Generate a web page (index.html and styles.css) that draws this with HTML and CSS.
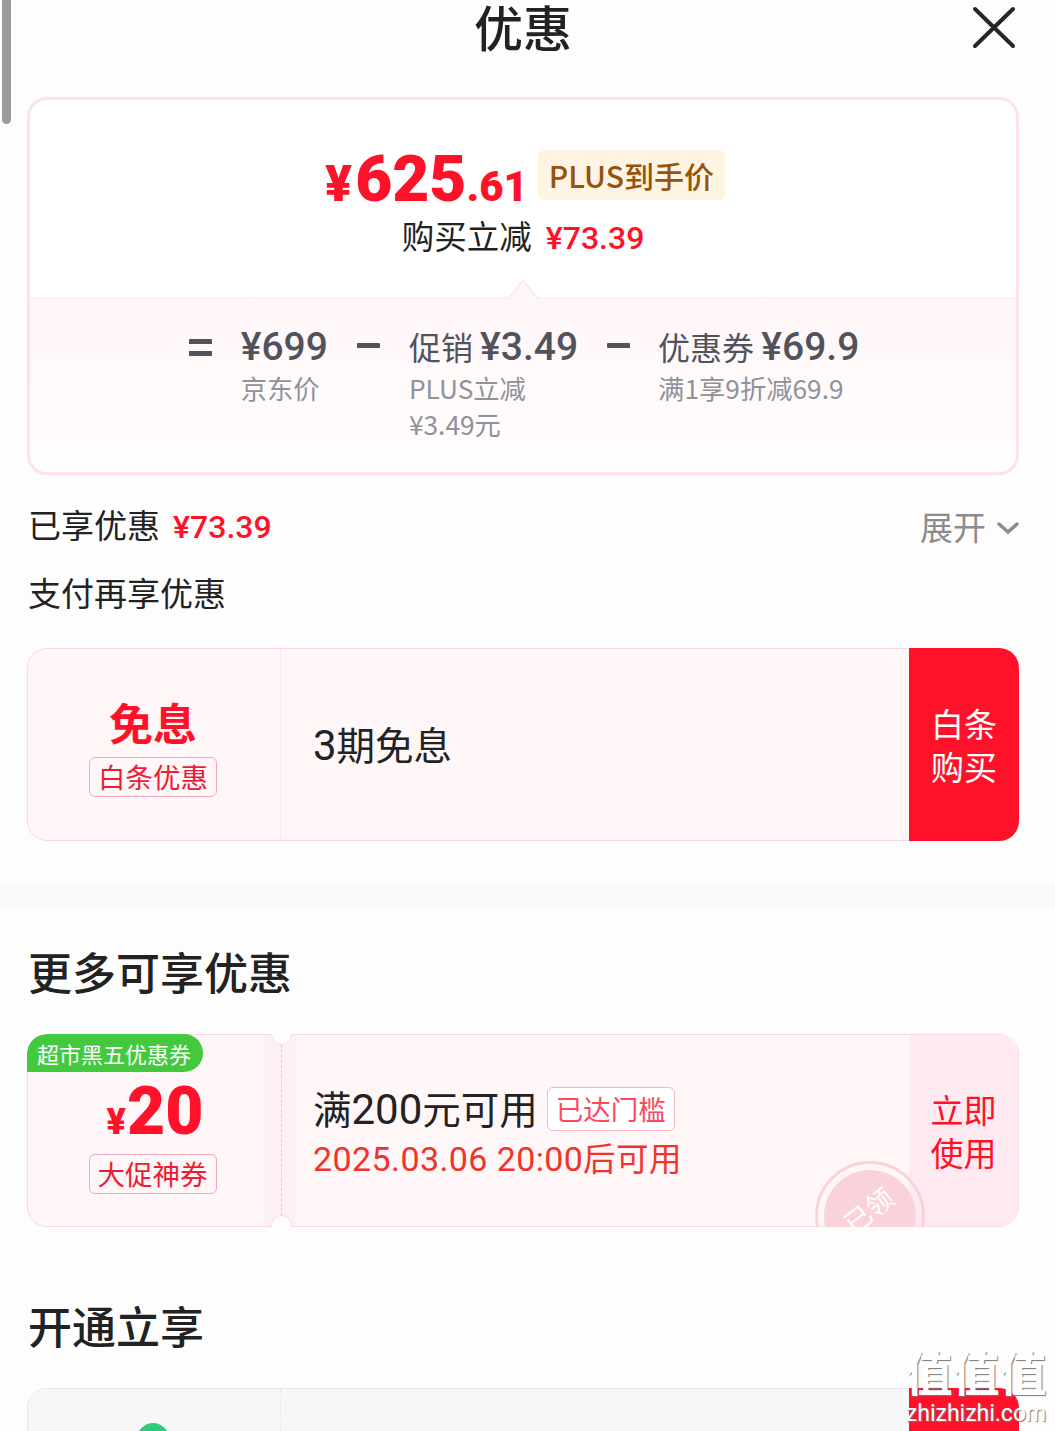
FILE: index.html
```html
<!DOCTYPE html>
<html lang="zh-CN">
<head>
    <meta charset="UTF-8">
    <meta name="viewport" content="width=device-width, initial-scale=1.0">
    <title>优惠</title>
    <link rel="stylesheet" href="styles.css">
</head>
<body>
<div class="scrollbar"></div>

<div class="header">
    <h1>优惠</h1>
    <svg class="close" width="44" height="44" viewBox="0 0 44 44"><path d="M3 3 L41 40 M41 3 L3 40" stroke="#262626" stroke-width="4" stroke-linecap="round"/></svg>
</div>

<div class="summary">
    <div class="summary-top">
        <div class="price-row">
            <span class="price"><span class="yen">¥</span>625<span class="cents">.61</span></span>
            <span class="plus-tag">PLUS到手价</span>
        </div>
        <div class="saved">购买立减<span class="saved-num">¥73.39</span></div>
    </div>
    <div class="summary-bottom">
        <svg class="arrow" width="32" height="20" viewBox="0 0 32 20"><path d="M1 20 L16 1 L31 20 Z" fill="#fff6f8"/><path d="M1 20 L16 1 L31 20" fill="none" stroke="#fde6ea" stroke-width="1.5"/></svg>
        <div class="formula">
            <span class="op op-eq"></span>
            <div class="term">
                <div class="term-main"><span class="term-num">¥699</span></div>
                <div class="term-sub">京东价</div>
            </div>
            <span class="op"></span>
            <div class="term">
                <div class="term-main">促销 <span class="term-num">¥3.49</span></div>
                <div class="term-sub">PLUS立减<br>¥3.49元</div>
            </div>
            <span class="op"></span>
            <div class="term term-last">
                <div class="term-main">优惠券 <span class="term-num">¥69.9</span></div>
                <div class="term-sub">满1享9折减69.9</div>
            </div>
        </div>
    </div>
</div>

<div class="line-row">
    <div>已享优惠<span class="line-num">¥73.39</span></div>
    <div class="expand">展开
        <svg class="chevron" width="22" height="14" viewBox="0 0 22 14"><path d="M2 3 L11 11 L20 3" fill="none" stroke="#8c8c8c" stroke-width="3.5" stroke-linecap="round"/></svg>
    </div>
</div>
<div class="pay-title">支付再享优惠</div>

<div class="coupon">
    <div class="coupon-left">
        <div class="free">免息</div>
        <div class="tag">白条优惠</div>
    </div>
    <div class="coupon-body">
        <div class="coupon-text"><span class="digits">3</span>期免息</div>
    </div>
    <div class="coupon-btn">白条<br>购买</div>
</div>

<div class="band"></div>

<h2 class="section-title">更多可享优惠</h2>

<div class="coupon coupon-used">
    <div class="corner">超市黑五优惠券</div>
    <div class="coupon-left coupon-left-ticket">
        <div class="amount"><span class="amount-yen">¥</span>20</div>
        <div class="tag">大促神券</div>
    </div>
    <div class="perforation"></div>
    <div class="coupon-body">
        <div class="coupon-row">
            <span class="coupon-text">满<span class="digits">200</span>元可用</span>
            <span class="reach">已达门槛</span>
        </div>
        <div class="coupon-date">2025.03.06 20:00<span class="date-suffix">后可用</span></div>
    </div>
    <div class="coupon-btn coupon-btn-light">立即<br>使用</div>
    <div class="stamp"><span>已领</span></div>
</div>

<h2 class="section-title section-title-2">开通立享</h2>

<div class="coupon coupon-grey">
    <div class="coupon-left">
        <div class="green-dot"></div>
    </div>
    <div class="coupon-body"></div>
    <div class="coupon-btn"></div>
</div>

<div class="watermark">
    <div class="wm-logo">值值值</div>
    <div class="wm-url">zhizhizhi.com</div>
</div>
</body>
</html>
```

FILE: styles.css
```css
html, body {
    height: 1431px;
    overflow: hidden;
}

body {
    position: relative;
    margin: 0;
    padding: 0 36px 0 27px;
    background: #fdfdfd;
    color: #222;
    font-family: "Noto Sans CJK SC", "Noto Sans", sans-serif;
}

.scrollbar {
    position: absolute;
    left: 2px;
    top: -10px;
    width: 9px;
    height: 134px;
    border-radius: 5px;
    background: #9b9b9b;
}

.header {
    position: relative;
    height: 97px;
}

.header h1 {
    margin: 0;
    font-size: 49px;
    font-weight: 500;
    line-height: 52px;
    text-align: center;
}

.close {
    position: absolute;
    right: 3px;
    top: 6px;
}

.summary {
    height: 378px;
    box-sizing: border-box;
    border: 3px solid #fde2e8;
    border-radius: 20px;
    overflow: hidden;
    display: flex;
    flex-direction: column;
    background: #fff;
}

.summary-top {
    height: 197px;
    padding-top: 53px;
    box-sizing: border-box;
    display: flex;
    flex-direction: column;
    align-items: center;
}

.price-row {
    display: flex;
    align-items: center;
    gap: 10px;
    height: 60px;
}

.price {
    margin-left: 4px;
    font-family: "Roboto", sans-serif;
    font-weight: 900;
    font-size: 64px;
    line-height: 60px;
    color: #ff1229;
}

.yen {
    margin-right: 3px;
    font-size: 50px;
}

.cents {
    font-size: 42px;
}

.plus-tag {
    height: 50px;
    line-height: 50px;
    padding: 0 11px;
    border-radius: 6px;
    background: #fff3e3;
    color: #96530a;
    font-size: 30px;
    font-weight: 500;
    margin-top: -16px;
}

.saved {
    margin-top: -1px;
    font-size: 32.5px;
    line-height: 46px;
}

.saved-num {
    margin-left: 14px;
    color: #ff1229;
    font-family: "Roboto", sans-serif;
    font-weight: 500;
    font-size: 32px;
}

.summary-bottom {
    position: relative;
    flex: 1;
    background: linear-gradient(#fff6f8, #fffdfd);
    border-top: 2px solid #fef1f4;
}

.arrow {
    position: absolute;
    left: 477px;
    top: -20px;
}

.formula {
    display: flex;
    justify-content: center;
    gap: 29px;
    padding-top: 24px;
    padding-left: 2px;
}

.op {
    flex: none;
    box-sizing: border-box;
    width: 23px;
    height: 5px;
    margin-top: 20px;
    border-radius: 1px;
    background: #50535c;
}

.op-eq {
    height: 17px;
    margin-top: 16px;
    background: none;
    border-top: 5px solid #50535c;
    border-bottom: 5px solid #50535c;
}

.term-last {
    margin-left: -1px;
}

.term-main {
    color: #50535c;
    font-size: 32px;
    line-height: 46px;
}

.term-num {
    font-family: "Roboto", sans-serif;
    font-size: 39px;
    font-weight: 500;
}

.term-sub {
    color: #8f929b;
    font-size: 26.3px;
    line-height: 36px;
}

.line-row {
    display: flex;
    justify-content: space-between;
    align-items: center;
    margin-top: 26px;
    padding-left: 1px;
    font-size: 33px;
    line-height: 46px;
}

.line-num {
    margin-left: 13px;
    color: #ff1229;
    font-family: "Roboto", sans-serif;
    font-size: 32px;
    font-weight: 500;
}

.expand {
    display: flex;
    align-items: center;
    gap: 11px;
    color: #8c8c8c;
}

.chevron {
    margin-top: 5px;
}

.pay-title {
    margin-top: 19px;
    padding-left: 1px;
    font-size: 33px;
    line-height: 46px;
}

.coupon {
    position: relative;
    display: flex;
    height: 193px;
    box-sizing: border-box;
    border: 1px solid #f8d9e0;
    border-radius: 20px;
    overflow: clip;
    overflow-clip-margin: border-box;
    margin-top: 33px;
    background: #fff6f8;
}

.coupon-left {
    width: 253px;
    flex: none;
    box-sizing: border-box;
    padding-top: 46px;
    padding-right: 2px;
    display: flex;
    flex-direction: column;
    align-items: center;
    border-right: 1px dashed #fbe1e6;
}

.free {
    color: #ff1229;
    font-size: 44px;
    font-weight: 700;
    line-height: 54px;
}

.tag {
    box-sizing: border-box;
    width: 128px;
    height: 40px;
    margin-top: 8px;
    line-height: 37px;
    text-align: center;
    border: 1px solid #f3a9bb;
    border-radius: 6px;
    color: #ec1c33;
    font-size: 27.5px;
}

.coupon-body {
    flex: 1;
    display: flex;
    flex-direction: column;
    justify-content: center;
    padding-left: 32px;
}

.coupon-text {
    font-size: 38.5px;
    line-height: 50px;
    color: #222;
}

.digits {
    font-family: "Roboto", sans-serif;
    font-size: 42px;
}

.coupon-btn {
    width: 110px;
    margin: -1px -1px -1px 0;
    flex: none;
    display: flex;
    align-items: center;
    justify-content: center;
    text-align: center;
    background: #ff1229;
    color: #fff;
    font-size: 33px;
    line-height: 43px;
}

.band {
    height: 22px;
    margin: 45px -36px 0 -27px;
    background: #f8f9fb;
}

.section-title {
    margin: 0;
    padding-top: 41px;
    padding-left: 1px;
    font-size: 44px;
    font-weight: 500;
    line-height: 44px;
    height: 44px;
}

.coupon-used {
    margin-top: 41px;
}

.coupon-left-ticket {
    width: 236px;
    border-right: none;
    padding-top: 44px;
    padding-left: 13px;
    padding-right: 0;
}

.corner {
    position: absolute;
    left: -1px;
    top: -1px;
    height: 38px;
    line-height: 38px;
    padding: 0 12px 0 10px;
    border-radius: 20px 19px 19px 0;
    background: #43c93e;
    color: #fff;
    font-size: 22px;
}

.amount {
    margin-left: 5px;
    color: #ff1229;
    font-family: "Roboto", sans-serif;
    font-weight: 900;
    font-size: 66px;
    line-height: 66px;
}

.amount-yen {
    margin-right: 1px;
    font-size: 36px;
}

.coupon-used .tag {
    margin-top: -1px;
}

.perforation {
    position: relative;
    width: 33px;
    flex: none;
    background: #fdf1f4;
}

.perforation::before {
    content: "";
    position: absolute;
    left: 17px;
    top: 0;
    bottom: 0;
    border-left: 1px dashed #f6c4cf;
}

.perforation::after {
    content: "";
    position: absolute;
    left: 7px;
    top: -11px;
    width: 19px;
    height: 19px;
    border-radius: 50%;
    background: #fdfdfd;
    border: 1px solid #f8d9e0;
    box-shadow: 0 191px 0 -1px #fdfdfd, 0 191px 0 0 #f8d9e0;
}

.coupon-used .coupon-body {
    padding-left: 16px;
    padding-top: 2px;
}

.coupon-row {
    display: flex;
    align-items: center;
    gap: 9px;
}

.reach {
    box-sizing: border-box;
    width: 128px;
    height: 44px;
    margin-top: 1px;
    line-height: 40px;
    text-align: center;
    border: 1px solid #f8b6c2;
    border-radius: 6px;
    background: #fff;
    color: #fb4a5e;
    font-size: 27.5px;
}

.coupon-date {
    margin-top: 2px;
    color: #f0342c;
    font-family: "Roboto", sans-serif;
    font-size: 34px;
    letter-spacing: 0.4px;
    line-height: 44px;
}

.date-suffix {
    font-size: 32.5px;
    letter-spacing: 0;
}

.coupon-btn-light {
    width: 109px;
    margin: 0;
    background: #feeaf0;
    color: #ff1229;
}

.stamp {
    position: absolute;
    left: 787px;
    top: 126px;
    box-sizing: border-box;
    width: 110px;
    height: 110px;
    border-radius: 50%;
    border: 3px solid #fad2d9;
    display: flex;
    align-items: center;
    justify-content: center;
}

.stamp::before {
    content: "";
    position: absolute;
    inset: 6px;
    border-radius: 50%;
    background: #fad2d9;
}

.stamp span {
    position: relative;
    margin: -14px 4px 0 0;
    color: #fff;
    font-size: 27px;
    transform: rotate(-38deg);
}

.section-title-2 {
    padding-top: 76px;
}

.coupon-grey {
    margin-top: 41px;
    height: 160px;
    border-color: #e8e8ea;
    background: #f7f7f9;
}

.coupon-grey .coupon-left {
    padding-top: 0;
    border-right-color: #e8e8ea;
}

.green-dot {
    width: 32px;
    height: 32px;
    margin-top: 34px;
    border-radius: 50%;
    background: #2ecb7a;
}

.watermark {
    position: absolute;
    right: 8px;
    bottom: 3px;
    width: 142px;
    text-align: center;
    color: #fff;
    text-shadow: 1px 1px 1px #777;
}

.wm-logo {
    margin-bottom: -1px;
    font-size: 47px;
    line-height: 60px;
    font-weight: 700;
    white-space: nowrap;
}

.wm-url {
    font-family: "Roboto", sans-serif;
    font-size: 23px;
    line-height: 28px;
    white-space: nowrap;
}
```
